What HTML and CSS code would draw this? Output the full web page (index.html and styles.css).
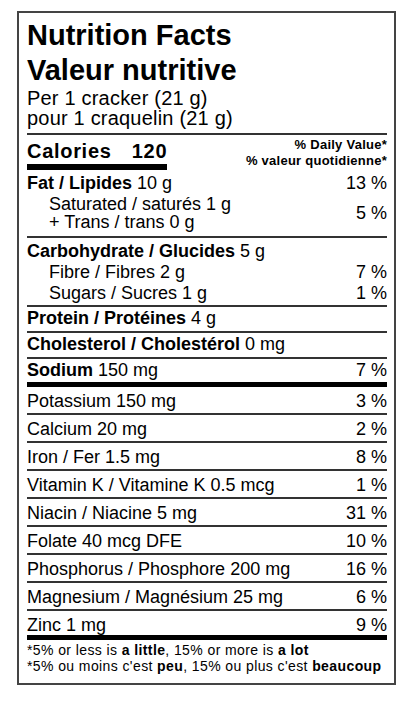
FILE: index.html
```html
<!DOCTYPE html>
<html lang="en">
<head>
  <meta charset="UTF-8" />
  <meta name="viewport" content="width=device-width, initial-scale=1.0"/>
  <title>Nutrition Facts - Valeur nutritive</title>
  <link rel="stylesheet" href="styles.css">
</head>
<body>
  <!-- NUTRITION LABEL -->
  <div class="label">
    <h1 class="title">Nutrition Facts<br>Valeur nutritive</h1>
    <div class="serving">Per 1 cracker (21 g)<br>pour 1 craquelin (21 g)</div>

    <!-- Calories + daily value heading -->
    <div class="calories">
      <div class="cal-amount">Calories <span class="cal-num">120</span></div>
      <div class="dv-head">% Daily Value*<br>% valeur quotidienne*</div>
    </div>

    <!-- Fat -->
    <div class="section fat">
      <div class="row"><span><b>Fat / Lipides</b> 10 g</span><span>13 %</span></div>
      <div class="row sub two-line"><span>Saturated / saturés 1 g<br>+ Trans / trans 0 g</span><span>5 %</span></div>
    </div>

    <!-- Carbohydrate -->
    <div class="section carb">
      <div class="row"><span><b>Carbohydrate / Glucides</b> 5 g</span></div>
      <div class="row sub"><span>Fibre / Fibres 2 g</span><span>7 %</span></div>
      <div class="row sub"><span>Sugars / Sucres 1 g</span><span>1 %</span></div>
    </div>

    <div class="section single">
      <div class="row"><span><b>Protein / Protéines</b> 4 g</span></div>
    </div>
    <div class="section single">
      <div class="row"><span><b>Cholesterol / Cholestérol</b> 0 mg</span></div>
    </div>
    <div class="section single sodium">
      <div class="row"><span><b>Sodium</b> 150 mg</span><span>7 %</span></div>
    </div>

    <!-- Vitamins & minerals -->
    <div class="minerals">
      <div class="row"><span>Potassium 150 mg</span><span>3 %</span></div>
      <div class="row"><span>Calcium 20 mg</span><span>2 %</span></div>
      <div class="row"><span>Iron / Fer 1.5 mg</span><span>8 %</span></div>
      <div class="row"><span>Vitamin K / Vitamine K 0.5 mcg</span><span>1 %</span></div>
      <div class="row"><span>Niacin / Niacine 5 mg</span><span>31 %</span></div>
      <div class="row"><span>Folate 40 mcg DFE</span><span>10 %</span></div>
      <div class="row"><span>Phosphorus / Phosphore 200 mg</span><span>16 %</span></div>
      <div class="row"><span>Magnesium / Magnésium 25 mg</span><span>6 %</span></div>
      <div class="row last"><span>Zinc 1 mg</span><span>9 %</span></div>
    </div>

    <!-- FOOTNOTE -->
    <div class="footnote">
      <p>*5% or less is <b>a little</b>, 15% or more is <b>a lot</b></p>
      <p>*5% ou moins c'est <b>peu</b>, 15% ou plus c'est <b>beaucoup</b></p>
    </div>
  </div>
</body>
</html>
```

FILE: styles.css
```css
/* ------------------------------------------------------------
   GLOBAL
------------------------------------------------------------ */
* {
  box-sizing: border-box;
}
body {
  margin: 0;
  font-family: "Liberation Sans", Arial, sans-serif;
  color: #000;
  background: #fff;
}
p {
  margin: 0;
}

/* ------------------------------------------------------------
   LABEL BOX
------------------------------------------------------------ */
.label {
  width: 379px;
  margin: 11px 0 0 17px;
  border: 2px solid #444;
  padding: 5px 7px 9px 8px;
}
.title {
  margin: 0;
  font-size: 29px;
  line-height: 35px;
  font-weight: bold;
}
.serving {
  font-size: 20px;
  line-height: 20px;
  letter-spacing: 0.2px;
  padding-bottom: 5px;
  border-bottom: 2px solid #333;
}

/* Calories */
.calories {
  display: flex;
  justify-content: space-between;
  align-items: flex-start;
}
.cal-amount {
  margin-top: 4px;
  font-size: 20px;
  line-height: 24px;
  font-weight: bold;
  letter-spacing: 0.7px;
  padding-bottom: 1px;
  border-bottom: 6px solid #000;
}
.cal-num {
  margin-left: 14px;
}
.dv-head {
  padding-top: 2px;
  text-align: right;
  font-size: 13px;
  line-height: 16px;
  font-weight: bold;
  letter-spacing: 0.25px;
}

/* ------------------------------------------------------------
   ROWS
------------------------------------------------------------ */
.row {
  display: flex;
  justify-content: space-between;
  align-items: center;
  font-size: 18px;
  line-height: 20px;
}
.sub {
  padding-left: 22px;
}
.section {
  border-bottom: 2px solid #333;
}
.fat {
  padding: 3px 0 5px;
}
.two-line {
  margin-top: 2px;
}
.two-line span:first-child {
  line-height: 18px;
}
.carb {
  padding: 3px 0 1px;
}
.carb .row {
  line-height: 21px;
}
.single {
  padding: 1px 0 3px;
}
.sodium {
  padding-bottom: 2px;
  border-bottom: 5px solid #000;
}
.minerals .row {
  padding: 4px 0 2px;
  border-bottom: 2px solid #333;
}
.minerals .row.last {
  padding-bottom: 0;
  border-bottom: 5px solid #000;
}

/* ------------------------------------------------------------
   FOOTNOTE
------------------------------------------------------------ */
.footnote {
  padding-top: 2px;
  font-size: 14px;
  line-height: 16px;
  letter-spacing: 0.4px;
}
```
